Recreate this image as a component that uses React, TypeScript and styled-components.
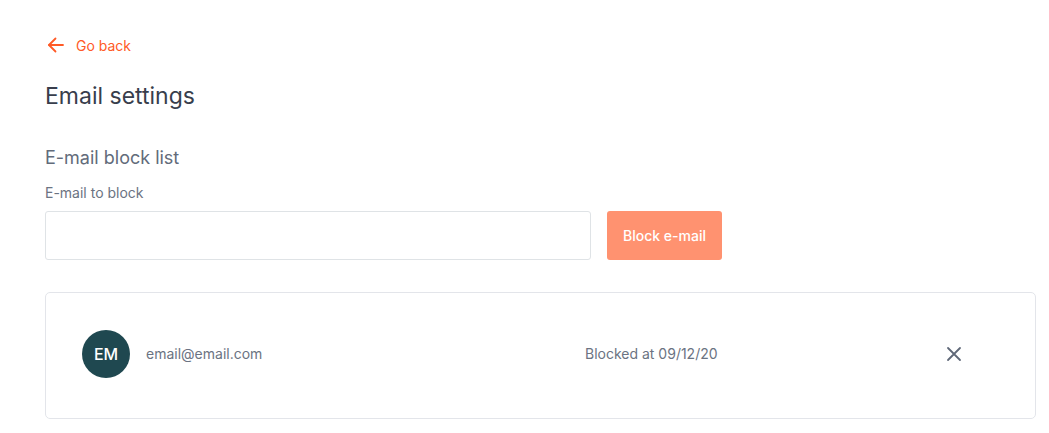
import * as React from 'react'
import styled, { createGlobalStyle } from 'styled-components'

const GlobalStyle = createGlobalStyle`
  body {
    margin: 0;
    background: #ffffff;
    font-family: Inter, "Noto Sans", sans-serif;
  }
`

const Page = styled.div`
  padding: 35px 13px 0 45px;
  display: flex;
  flex-direction: column;
`

const BackLink = styled.a`
  display: flex;
  align-items: center;
  gap: 11px;
  color: #ff5a26;
  font-size: 14px;
  text-decoration: none;
  cursor: pointer;
  height: 20px;
  margin-left: 2px;
`

const Title = styled.h1`
  margin: 27px 0 0;
  font-size: 23px;
  font-weight: 400;
  color: #383e4c;
  line-height: 28px;
`

const SectionTitle = styled.h2`
  margin: 37px 0 0;
  font-size: 18px;
  font-weight: 400;
  color: #626b7a;
  line-height: 22px;
`

const Label = styled.label`
  margin-top: 15px;
  font-size: 14px;
  color: #6b7382;
  line-height: 17px;
`

const FormRow = styled.div`
  display: flex;
  gap: 16px;
  margin-top: 10px;
`

const Input = styled.input`
  width: 546px;
  height: 49px;
  box-sizing: border-box;
  border: 1px solid #dfe3e6;
  border-radius: 3px;
  padding: 0 14px;
  font: inherit;
  font-size: 14px;
  outline: none;
`

const Button = styled.button`
  width: 115px;
  height: 49px;
  border: none;
  border-radius: 3px;
  background: #ff9270;
  color: #ffffff;
  font-family: inherit;
  font-size: 14px;
  font-weight: 500;
  cursor: pointer;
`

const Card = styled.div`
  margin-top: 32px;
  height: 127px;
  box-sizing: border-box;
  border: 1px solid #e3e5ea;
  border-radius: 5px;
  display: flex;
  align-items: center;
  padding: 0 72px 4px 36px;
`

const Avatar = styled.div`
  width: 48px;
  height: 48px;
  border-radius: 50%;
  background: #1f4850;
  color: #ffffff;
  font-size: 16px;
  font-weight: 500;
  display: flex;
  align-items: center;
  justify-content: center;
  flex-shrink: 0;
`

const Email = styled.span`
  margin-left: 16px;
  width: 439px;
  font-size: 14px;
  color: #6b7382;
`

const BlockedAt = styled.span`
  flex: 1;
  font-size: 14px;
  color: #6b7382;
`

const RemoveButton = styled.button`
  border: none;
  background: none;
  padding: 0;
  display: flex;
  cursor: pointer;
  color: #5f6878;
`

const ArrowLeft = () => (
  <svg width="18" height="18" viewBox="0 0 18 18" fill="none" stroke="currentColor" strokeWidth="1.8" strokeLinecap="round" strokeLinejoin="round">
    <path d="M16 9H2" />
    <path d="M8.5 2.5L2 9l6.5 6.5" />
  </svg>
)

const CloseIcon = () => (
  <svg width="18" height="18" viewBox="0 0 18 18" fill="none" stroke="currentColor" strokeWidth="1.8" strokeLinecap="round">
    <path d="M3 3l12 12M15 3L3 15" />
  </svg>
)

export default function App() {
  const [value, setValue] = React.useState('')

  return (
    <>
      <GlobalStyle />
      <Page>
        <BackLink>
          <ArrowLeft />
          Go back
        </BackLink>
        <Title>Email settings</Title>
        <SectionTitle>E-mail block list</SectionTitle>
        <Label>E-mail to block</Label>
        <FormRow>
          <Input value={value} onChange={(e) => setValue(e.target.value)} />
          <Button>Block e-mail</Button>
        </FormRow>
        <Card>
          <Avatar>EM</Avatar>
          <Email>email@email.com</Email>
          <BlockedAt>Blocked at 09/12/20</BlockedAt>
          <RemoveButton aria-label="Remove">
            <CloseIcon />
          </RemoveButton>
        </Card>
      </Page>
    </>
  )
}
